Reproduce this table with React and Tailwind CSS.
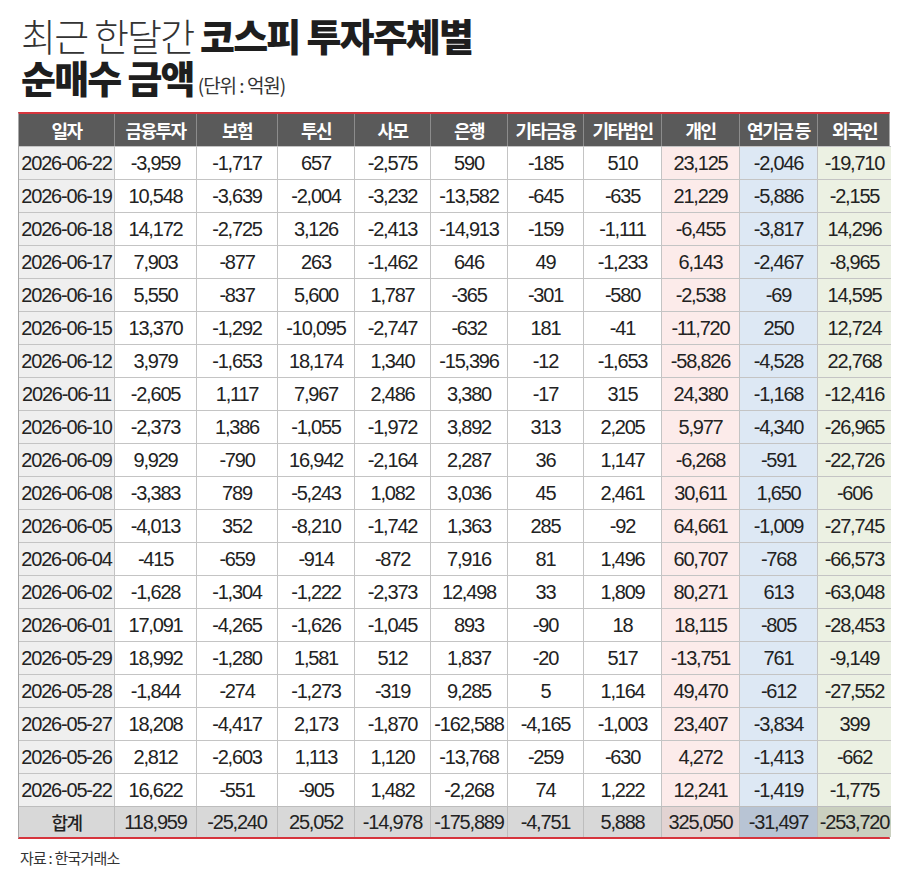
import React from "react";

const headers = ["일자","금융투자","보험","투신","사모","은행","기타금융","기타법인","개인","연기금 등","외국인"];

const rows = [
["2026-06-22","-3,959","-1,717","657","-2,575","590","-185","510","23,125","-2,046","-19,710"],
["2026-06-19","10,548","-3,639","-2,004","-3,232","-13,582","-645","-635","21,229","-5,886","-2,155"],
["2026-06-18","14,172","-2,725","3,126","-2,413","-14,913","-159","-1,111","-6,455","-3,817","14,296"],
["2026-06-17","7,903","-877","263","-1,462","646","49","-1,233","6,143","-2,467","-8,965"],
["2026-06-16","5,550","-837","5,600","1,787","-365","-301","-580","-2,538","-69","14,595"],
["2026-06-15","13,370","-1,292","-10,095","-2,747","-632","181","-41","-11,720","250","12,724"],
["2026-06-12","3,979","-1,653","18,174","1,340","-15,396","-12","-1,653","-58,826","-4,528","22,768"],
["2026-06-11","-2,605","1,117","7,967","2,486","3,380","-17","315","24,380","-1,168","-12,416"],
["2026-06-10","-2,373","1,386","-1,055","-1,972","3,892","313","2,205","5,977","-4,340","-26,965"],
["2026-06-09","9,929","-790","16,942","-2,164","2,287","36","1,147","-6,268","-591","-22,726"],
["2026-06-08","-3,383","789","-5,243","1,082","3,036","45","2,461","30,611","1,650","-606"],
["2026-06-05","-4,013","352","-8,210","-1,742","1,363","285","-92","64,661","-1,009","-27,745"],
["2026-06-04","-415","-659","-914","-872","7,916","81","1,496","60,707","-768","-66,573"],
["2026-06-02","-1,628","-1,304","-1,222","-2,373","12,498","33","1,809","80,271","613","-63,048"],
["2026-06-01","17,091","-4,265","-1,626","-1,045","893","-90","18","18,115","-805","-28,453"],
["2026-05-29","18,992","-1,280","1,581","512","1,837","-20","517","-13,751","761","-9,149"],
["2026-05-28","-1,844","-274","-1,273","-319","9,285","5","1,164","49,470","-612","-27,552"],
["2026-05-27","18,208","-4,417","2,173","-1,870","-162,588","-4,165","-1,003","23,407","-3,834","399"],
["2026-05-26","2,812","-2,603","1,113","1,120","-13,768","-259","-630","4,272","-1,413","-662"],
["2026-05-22","16,622","-551","-905","1,482","-2,268","74","1,222","12,241","-1,419","-1,775"],
];

const total = ["합계","118,959","-25,240","25,052","-14,978","-175,889","-4,751","5,888","325,050","-31,497","-253,720"];

const grid = "grid grid-cols-[96px_82px_81px_77px_76px_77px_76px_78px_78px_78px_73px]";

const numFont = { fontFamily: '"Liberation Sans", Arial, sans-serif' };
const krFont = { fontFamily: '"Noto Sans CJK KR", "Noto Sans", sans-serif' };

function bodyBg(i) {
  if (i === 0) return "bg-[#efefef]";
  if (i === 8) return "bg-[#fcebea]";
  if (i === 9) return "bg-[#dde8f4]";
  if (i === 10) return "bg-[#ecf1e3]";
  return "bg-white";
}

function totalBg(i) {
  if (i === 8) return "bg-[#e2d3d2]";
  if (i === 9) return "bg-[#b8c4d4]";
  if (i === 10) return "bg-[#cad0bf]";
  return "bg-[#d8d8d8]";
}

export default function App() {
  return (
    <div className="w-[912px] h-[878px] bg-white pl-[18px] pt-[14px] text-[#222]" style={krFont}>
      <div className="pl-[3px]">
        <div className="h-[42px] text-[38px] leading-[42px] tracking-[-1.8px] whitespace-nowrap">
          <span className="font-light text-[#333]">최근 한달간 </span>
          <span className="font-black text-[#1e1e1e]">코스피 투자주체별</span>
        </div>
        <div className="h-[42px] flex items-baseline leading-[42px] whitespace-nowrap">
          <span className="text-[38px] tracking-[-1.8px] font-black text-[#1e1e1e]">순매수 금액</span>
          <span className="ml-[4px] text-[19px] tracking-[-1px] text-[#333]">(단위 : 억원)</span>
        </div>
      </div>

      <div className="mt-[14px] w-[872px] border-t-[2px] border-t-[#d6353d] border-b-[2px] border-b-[#d6353d] border-l border-l-[#a8a8a8] border-r border-r-[#a8a8a8]">
        <div className={`${grid} h-[32px] bg-[#5a5a5a]`}>
          {headers.map((h, i) => (
            <div
              key={h}
              className={`flex items-center justify-center text-white font-bold text-[18px] tracking-[-1.5px] ${i < headers.length - 1 ? "border-r border-r-[#8c8c8c]" : ""}`}
            >
              {h}
            </div>
          ))}
        </div>
        {rows.map((r) => (
          <div key={r[0]} className={`${grid} h-[33px]`}>
            {r.map((c, i) => (
              <div
                key={i}
                style={numFont}
                className={`flex items-center justify-center border-t border-t-[#c4c4c4] ${i < r.length - 1 ? "border-r border-r-[#c4c4c4]" : ""} ${bodyBg(i)} text-[20px] tracking-[-1.2px] text-[#222]`}
              >
                {c}
              </div>
            ))}
          </div>
        ))}
        <div className={`${grid} h-[31px]`}>
          {total.map((c, i) => (
            <div
              key={i}
              style={i === 0 ? krFont : numFont}
              className={`flex items-center justify-center border-t border-t-[#bdbdbd] ${i < total.length - 1 ? "border-r border-r-[#bdbdbd]" : ""} ${totalBg(i)} ${i === 0 ? "text-[18px] font-medium tracking-[-1.5px]" : "text-[20px] tracking-[-1.2px]"} text-[#222]`}
            >
              {c}
            </div>
          ))}
        </div>
      </div>

      <div className="mt-[8px] pl-[2px] text-[15px] tracking-[-0.8px] text-[#333]">자료 : 한국거래소</div>
    </div>
  );
}
